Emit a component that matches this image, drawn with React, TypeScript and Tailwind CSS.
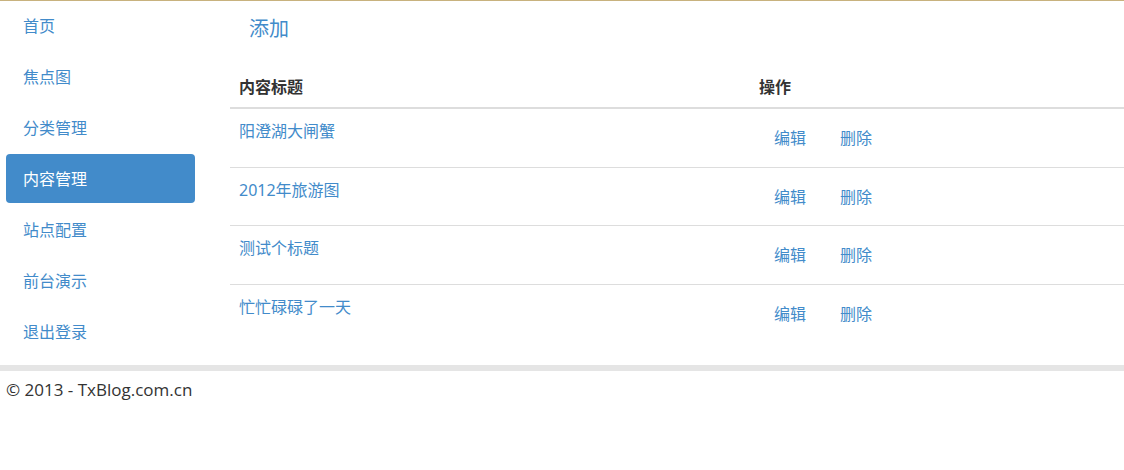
import React from "react";

const navItems = ["首页", "焦点图", "分类管理", "内容管理", "站点配置", "前台演示", "退出登录"];
const rows = [
  { t: "阳澄湖大闸蟹", h: "h-[59px]" },
  { t: "2012年旅游图", h: "h-[58px]" },
  { t: "测试个标题", h: "h-[59px]" },
  { t: "忙忙碌碌了一天", h: "h-[59px]" },
];

export default function App() {
  return (
    <div
      className="w-[1124px] min-h-[470px] bg-white text-[#333]"
      style={{ fontFamily: '"Noto Sans", "Noto Sans CJK SC", sans-serif' }}
    >
      <div className="h-px bg-[#c8b27e]" />
      <div className="flex h-[364px]">
        <div className="w-[230px] shrink-0 pl-[6px] pr-[35px]">
          <ul className="flex flex-col gap-[2px]">
            {navItems.map((n, i) => (
              <li
                key={n}
                className={
                  "h-[49px] flex items-center pl-[17px] rounded-[4px] text-[16px] " +
                  (i === 3 ? "bg-[#428bca] text-white" : "text-[#428bca]")
                }
              >
                {n}
              </li>
            ))}
          </ul>
        </div>
        <div className="flex-1">
          <div className="h-[67px] pt-[14px] pl-[19px] text-[20px] leading-[28px] text-[#428bca]">添加</div>
          <div className="flex h-[41px] items-center pb-[1px] border-b-2 border-[#ddd] font-bold text-[16px]">
            <div className="w-[521px] pl-[9px]">内容标题</div>
            <div className="pl-[8px]">操作</div>
          </div>
          {rows.map((r) => (
            <div key={r.t} className={"flex border-b border-[#ddd] last:border-b-0 text-[16px] text-[#428bca] " + r.h}>
              <div className="w-[521px] pl-[9px] pt-[11px] leading-[22px]">{r.t}</div>
              <div className="flex gap-[34px] pl-[23px] pt-[18px] leading-[22px]">
                <span>编辑</span>
                <span>删除</span>
              </div>
            </div>
          ))}
        </div>
      </div>
      <div className="h-[6px] bg-[#e5e5e5]" />
      <div
        className="pl-[6px] pt-[8px] text-[17px] leading-[22px] text-[#333]"
        style={{ fontFamily: '"Open Sans", "Noto Sans CJK SC", sans-serif' }}
      >
        © 2013 - TxBlog.com.cn
      </div>
    </div>
  );
}
